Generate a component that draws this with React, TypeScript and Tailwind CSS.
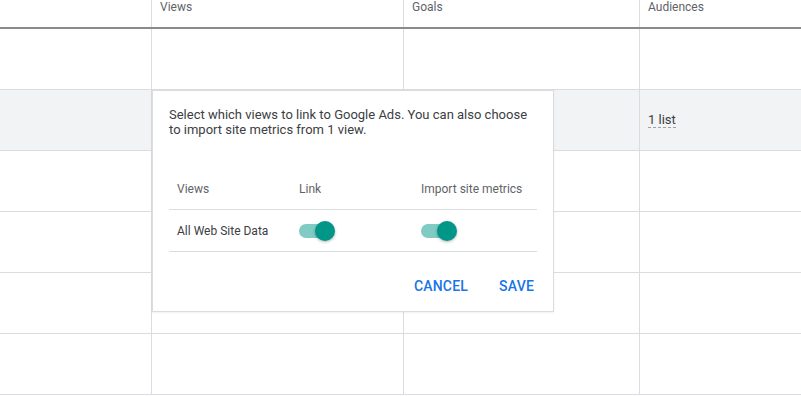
import React from "react";

const cols = "grid grid-cols-[151px_252px_236px_1fr]";

const Toggle = () => (
  <div className="relative h-5 w-[36px] flex items-center">
    <div className="h-[14px] w-[34px] rounded-full bg-[#80cbc4]" />
    <div className="absolute left-[16px] top-0 h-5 w-5 rounded-full bg-[#009688] shadow-[0_1px_3px_rgba(0,0,0,0.3)]" />
  </div>
);

const Row = ({ shaded, children }: { shaded?: boolean; children?: React.ReactNode }) => (
  <div className={`${cols} h-[61px] border-b border-[#dadce0] ${shaded ? "bg-[#f1f3f4]" : "bg-white"}`}>
    <div />
    <div className="border-l border-[#dadce0]" />
    <div className="border-l border-[#dadce0]" />
    <div className="border-l border-[#dadce0] pl-2 flex items-center">{children}</div>
  </div>
);

export default function App() {
  return (
    <div className="relative h-[396px] w-[801px] overflow-hidden bg-white font-['Roboto',sans-serif]">
      <div className={`${cols} h-[29px] border-b-2 border-[#8a8a8a] text-[12px] leading-[14px] text-[#5f6368]`}>
        <div />
        <div className="border-l border-[#dadce0] pl-2">Views</div>
        <div className="border-l border-[#dadce0] pl-2">Goals</div>
        <div className="border-l border-[#dadce0] pl-2">Audiences</div>
      </div>
      <Row />
      <Row shaded>
        <span className="text-[13px] text-[#3c4043] border-b border-dashed border-[#9aa0a6] leading-[15px]">1 list</span>
      </Row>
      <Row />
      <Row />
      <Row />
      <Row />

      <div className="absolute left-[152px] top-[90px] w-[402px] border border-[#dadce0] bg-white px-4 pt-4 pb-[15px] shadow-[0_1px_2px_rgba(0,0,0,0.06)]">
        <p className="text-[13px] leading-[15px] text-[#3c4043]">
          Select which views to link to Google Ads. You can also choose to import site metrics from 1 view.
        </p>
        <div className="mt-8 text-[12px] text-[#5f6368]">
          <div className="grid h-[41px] grid-cols-[122px_122px_1fr] items-center border-b border-[#dadce0]">
            <div className="pl-2">Views</div>
            <div className="pl-[8px]">Link</div>
            <div className="pl-[8px]">Import site metrics</div>
          </div>
          <div className="grid h-[42px] grid-cols-[122px_122px_1fr] items-center border-b border-[#dadce0] text-[#3c4043]">
            <div className="pl-2">All Web Site Data</div>
            <div className="pl-2"><Toggle /></div>
            <div className="pl-2"><Toggle /></div>
          </div>
        </div>
        <div className="mt-6 flex items-center justify-end gap-[31px] pr-[3px] text-[14px] font-medium leading-5 tracking-[0.2px] text-[#1a73e8]">
          <button>CANCEL</button>
          <button>SAVE</button>
        </div>
      </div>
    </div>
  );
}
